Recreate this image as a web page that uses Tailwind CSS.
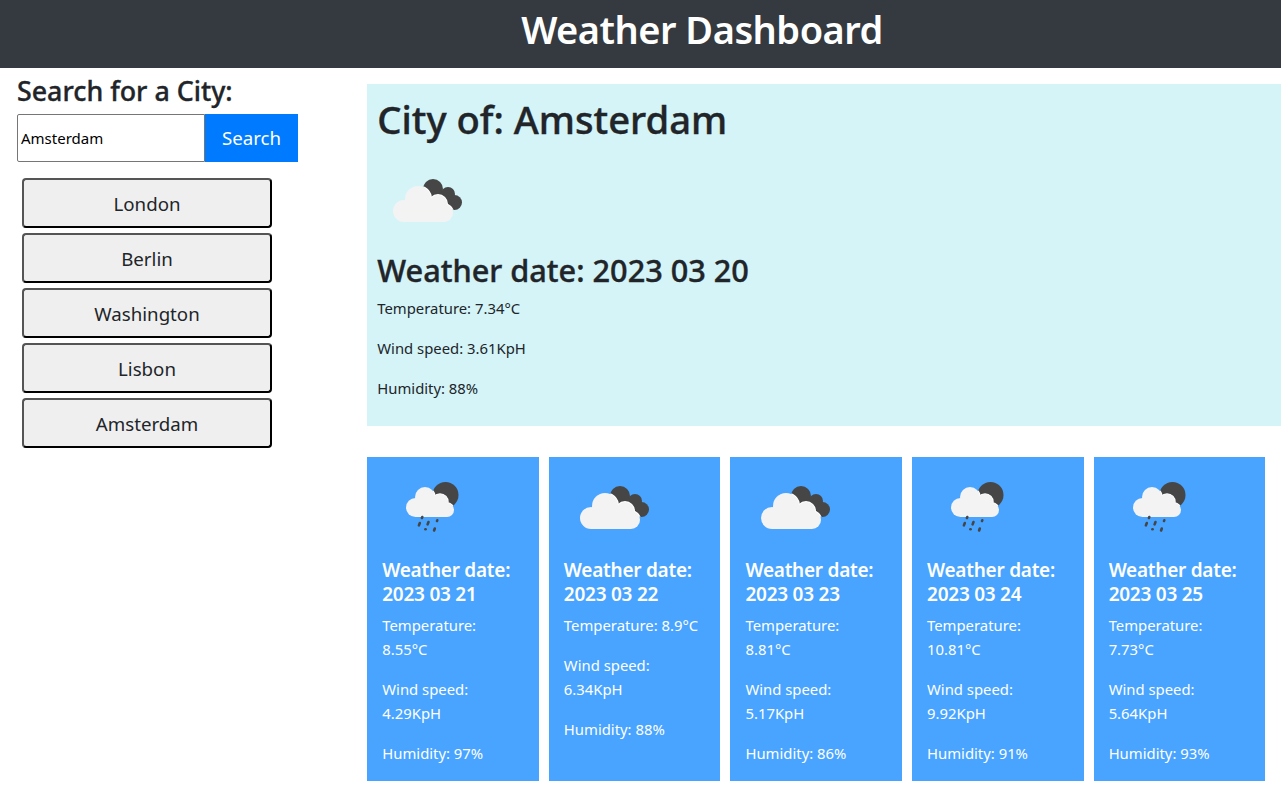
<!DOCTYPE html>
<html lang="en">
<head>
<meta charset="utf-8">
<title>Weather Dashboard</title>
<script src="https://cdn.jsdelivr.net/npm/@tailwindcss/browser@4"></script>
</head>
<body class="bg-white text-[#212529] font-['Noto_Sans',sans-serif] overflow-hidden">
<svg width="0" height="0" class="absolute">
  <defs>
    <clipPath id="darkA"><circle cx="56" cy="39" r="10"/><circle cx="71" cy="44" r="7"/><circle cx="77.5" cy="52.5" r="7.5"/><rect x="52" y="42" width="24" height="17"/></clipPath>
    <clipPath id="darkB"><circle cx="63.5" cy="38" r="13"/></clipPath>
    <g id="overcast">
      <g fill="#464646"><circle cx="56" cy="39" r="10"/><circle cx="71" cy="44" r="7"/><circle cx="77.5" cy="52.5" r="7.5"/><rect x="52" y="42" width="24" height="17"/></g>
      <g clip-path="url(#darkA)"><g fill="#fff" stroke="#fff" stroke-width="2"><circle cx="27" cy="61" r="11"/><circle cx="41" cy="49" r="13"/><circle cx="61" cy="54" r="9"/><circle cx="67" cy="63" r="9"/><rect x="27" y="55" width="40" height="17"/></g></g>
      <g fill="#f3f3f3"><circle cx="27" cy="61" r="11"/><circle cx="41" cy="49" r="13"/><circle cx="61" cy="54" r="9"/><circle cx="67" cy="63" r="9"/><rect x="27" y="55" width="40" height="17"/></g>
    </g>
    <g id="rain">
      <circle cx="63.5" cy="38" r="13" fill="#464646"/>
      <g clip-path="url(#darkB)"><g fill="#fff" stroke="#fff" stroke-width="1.5"><circle cx="33.5" cy="50.5" r="9.5"/><circle cx="43" cy="40" r="10"/><circle cx="58" cy="45" r="8"/><circle cx="65" cy="53" r="7"/><rect x="33" y="45" width="32" height="15"/></g></g>
      <g fill="#f3f3f3"><circle cx="33.5" cy="50.500" r="9.5"/><circle cx="43" cy="40" r="10"/><circle cx="58" cy="45" r="8"/><circle cx="65" cy="53" r="7"/><rect x="33" y="45" width="32" height="15"/></g>
      <g stroke="#464646" stroke-width="2.6" stroke-linecap="round"><path d="M40.3 60l-.4 1"/><path d="M37.8 66l-.9 2.4"/><path d="M46.5 65l-.9 2.4"/><path d="M55.3 63.300l-.3.700"/><path d="M43.400 72.300h.2"/><path d="M52.800 71.500l-.7 2"/></g>
    </g>
  </defs>
</svg>

<header class="h-[68px] bg-[#343a40] flex items-center justify-center pl-[123px] pb-[10px]">
  <h1 class="text-[38px] leading-[48px] font-semibold tracking-[-0.5px] text-white">Weather Dashboard</h1>
</header>

<div class="flex">
  <aside class="w-[367.25px] shrink-0 pl-[17px] pt-[6px]">
    <h3 class="text-[26.8px] leading-[33px] font-medium [-webkit-text-stroke:0.35px_#212529] mb-[7px]">Search for a City:</h3>
    <form class="flex h-12 w-[281px]">
      <input type="text" value="Amsterdam" class="w-[188px] shrink-0 h-12 border border-[#767676] rounded-l-[2px] px-[3px] text-[15px] text-black bg-white font-['Noto_Sans',sans-serif]">
      <button type="button" class="w-[93px] shrink-0 h-12 bg-[#007bff] text-white text-[18.7px]">Search</button>
    </form>
    <div class="flex flex-col gap-[5px] mt-4 ml-[5px] w-[250px]">
      <button type="button" class="h-[50px] pt-[2px] bg-[#efefef] rounded-[4px] border-2 border-t-[#555] border-l-[#555] border-r-black border-b-black text-[18.7px]">London</button>
      <button type="button" class="h-[50px] pt-[2px] bg-[#efefef] rounded-[4px] border-2 border-t-[#555] border-l-[#555] border-r-black border-b-black text-[18.7px]">Berlin</button>
      <button type="button" class="h-[50px] pt-[2px] bg-[#efefef] rounded-[4px] border-2 border-t-[#555] border-l-[#555] border-r-black border-b-black text-[18.7px]">Washington</button>
      <button type="button" class="h-[50px] pt-[2px] bg-[#efefef] rounded-[4px] border-2 border-t-[#555] border-l-[#555] border-r-black border-b-black text-[18.7px]">Lisbon</button>
      <button type="button" class="h-[50px] pt-[2px] bg-[#efefef] rounded-[4px] border-2 border-t-[#555] border-l-[#555] border-r-black border-b-black text-[18.7px]">Amsterdam</button>
    </div>
  </aside>

  <main class="flex-1 min-w-0 pt-4">
    <section class="bg-[#d4f4f8] px-[10px] pt-[11px] h-[342px]">
      <h1 class="text-[38.2px] leading-[48px] font-medium [-webkit-text-stroke:0.4px_#212529] mb-[7px]">City of: Amsterdam</h1>
      <svg width="100" height="100" viewBox="0 0 100 100" class="block"><use href="#overcast"/></svg>
      <h2 class="text-[30.7px] leading-[38px] font-medium [-webkit-text-stroke:0.4px_#212529] pt-[1px] mb-[7px]">Weather date: 2023 03 20</h2>
      <p class="text-[14.85px] leading-6 mb-4">Temperature: 7.34°C</p>
      <p class="text-[14.85px] leading-6 mb-4">Wind speed: 3.61KpH</p>
      <p class="text-[14.85px] leading-6 mb-4">Humidity: 88%</p>
    </section>

    <div class="flex gap-[10px] mt-[31px] pr-[15.75px]">
      <article class="flex-1 h-[324px] bg-[#48a4ff] text-white px-[15px]">
        <svg width="100" height="100" viewBox="0 0 100 100" class="block"><use href="#rain"/></svg>
        <h5 class="text-[19px] leading-6 font-semibold tracking-[-0.25px] pt-[1px] mb-[7px]">Weather date: 2023 03 21</h5>
        <p class="text-[14.85px] leading-6 mb-4">Temperature:<br>8.55°C</p>
        <p class="text-[14.85px] leading-6 mb-4">Wind speed:<br>4.29KpH</p>
        <p class="text-[14.85px] leading-6 mb-4">Humidity: 97%</p>
      </article>
      <article class="flex-1 h-[324px] bg-[#48a4ff] text-white px-[15px]">
        <svg width="100" height="100" viewBox="0 0 100 100" class="block"><use href="#overcast"/></svg>
        <h5 class="text-[19px] leading-6 font-semibold tracking-[-0.25px] pt-[1px] mb-[7px]">Weather date: 2023 03 22</h5>
        <p class="text-[14.85px] leading-6 mb-4 whitespace-nowrap">Temperature: 8.9°C</p>
        <p class="text-[14.85px] leading-6 mb-4">Wind speed:<br>6.34KpH</p>
        <p class="text-[14.85px] leading-6 mb-4">Humidity: 88%</p>
      </article>
      <article class="flex-1 h-[324px] bg-[#48a4ff] text-white px-[15px]">
        <svg width="100" height="100" viewBox="0 0 100 100" class="block"><use href="#overcast"/></svg>
        <h5 class="text-[19px] leading-6 font-semibold tracking-[-0.25px] pt-[1px] mb-[7px]">Weather date: 2023 03 23</h5>
        <p class="text-[14.85px] leading-6 mb-4">Temperature:<br>8.81°C</p>
        <p class="text-[14.85px] leading-6 mb-4">Wind speed:<br>5.17KpH</p>
        <p class="text-[14.85px] leading-6 mb-4">Humidity: 86%</p>
      </article>
      <article class="flex-1 h-[324px] bg-[#48a4ff] text-white px-[15px]">
        <svg width="100" height="100" viewBox="0 0 100 100" class="block"><use href="#rain"/></svg>
        <h5 class="text-[19px] leading-6 font-semibold tracking-[-0.25px] pt-[1px] mb-[7px]">Weather date: 2023 03 24</h5>
        <p class="text-[14.85px] leading-6 mb-4">Temperature:<br>10.81°C</p>
        <p class="text-[14.85px] leading-6 mb-4">Wind speed:<br>9.92KpH</p>
        <p class="text-[14.85px] leading-6 mb-4">Humidity: 91%</p>
      </article>
      <article class="flex-1 h-[324px] bg-[#48a4ff] text-white px-[15px]">
        <svg width="100" height="100" viewBox="0 0 100 100" class="block"><use href="#rain"/></svg>
        <h5 class="text-[19px] leading-6 font-semibold tracking-[-0.25px] pt-[1px] mb-[7px]">Weather date: 2023 03 25</h5>
        <p class="text-[14.85px] leading-6 mb-4">Temperature:<br>7.73°C</p>
        <p class="text-[14.85px] leading-6 mb-4">Wind speed:<br>5.64KpH</p>
        <p class="text-[14.85px] leading-6 mb-4">Humidity: 93%</p>
      </article>
    </div>
  </main>
</div>
</body>
</html>
